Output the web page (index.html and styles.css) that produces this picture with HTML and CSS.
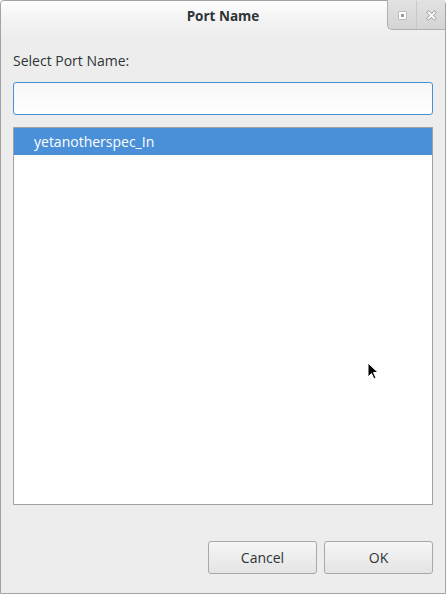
FILE: index.html
```html
<!DOCTYPE html>
<html>
<head>
<meta charset="utf-8">
<link rel="stylesheet" href="styles.css">
</head>
<body>
<div class="window">
  <div class="titlebar">
    <div class="spacer"></div>
    <div class="title">Port Name</div>
    <div class="wbuttons">
      <div class="wbtn">
        <svg width="9" height="9" viewBox="0 0 9 9"><rect x="0.5" y="0.5" width="8" height="8" fill="#9a9a9a"/><rect x="1" y="1" width="7" height="7" fill="#ffffff"/><rect x="3" y="3" width="3" height="3" fill="#9a9a9a"/></svg>
      </div>
      <div class="wbtn">
        <svg width="11" height="11" viewBox="0 0 11 11"><path d="M2.5 2.5 L8.5 8.5 M8.5 2.5 L2.5 8.5" stroke="#9a9a9a" stroke-width="3.2" stroke-linecap="square"/><path d="M2.5 2.5 L8.5 8.5 M8.5 2.5 L2.5 8.5" stroke="#ffffff" stroke-width="1.8" stroke-linecap="square"/></svg>
      </div>
    </div>
  </div>
  <div class="content">
    <div class="label">Select Port Name:</div>
    <div class="entry"></div>
    <div class="list">
      <div class="row selected">yetanotherspec_In</div>
    </div>
    <div class="actions">
      <div class="btn">Cancel</div>
      <div class="btn">OK</div>
    </div>
  </div>
  <svg class="cursor" width="13" height="19" viewBox="0 0 13 19"><path d="M1 1 L1 15 L4.5 11.5 L7 17 L9 16 L6.5 10.5 L11 10.5 Z" fill="#000" stroke="#fff" stroke-width="1"/></svg>
</div>
</body>
</html>
```
FILE: styles.css
```css
html, body {
  margin: 0;
  padding: 0;
}
body {
  width: 446px;
  height: 594px;
  overflow: hidden;
  font-family: "Open Sans", "DejaVu Sans", sans-serif;
  font-size: 14px;
  color: #2e3436;
}
.window {
  position: relative;
  box-sizing: border-box;
  width: 446px;
  height: 594px;
  border: 1px solid #a3a3a3;
  border-radius: 4px 4px 0 0;
  background: #ededed;
}
.titlebar {
  height: 39px;
  display: grid;
  grid-template-columns: 58px 1fr 58px;
  align-items: start;
  background: linear-gradient(#ffffff, #f4f4f4 40%, #ededed);
  border-radius: 4px 4px 0 0;
}
.title {
  text-align: center;
  font-weight: bold;
  font-size: 13.5px;
  line-height: 16px;
  padding-top: 7px;
  color: #2e3436;
}
.wbuttons {
  display: flex;
  border-left: 1px solid #b0b0b0;
  border-bottom: 1px solid #b0b0b0;
  border-radius: 0 0 0 5px;
  background: linear-gradient(#e2e2e2, #d4d4d4);
  margin-top: -1px;
  padding-top: 1px;
  box-sizing: border-box;
  height: 30px;
}
.wbtn {
  flex: 1;
  display: flex;
  align-items: center;
  justify-content: center;
}
.wbtn + .wbtn {
  border-left: 1px solid #c8c8c8;
}
.content {
  display: flex;
  flex-direction: column;
  padding: 0 12px;
}
.label {
  margin-top: 12px;
  line-height: 18px;
  height: 18px;
  color: #2e3436;
}
.entry {
  margin-top: 12px;
  height: 33px;
  box-sizing: border-box;
  border: 1px solid #4a90d9;
  border-radius: 3px;
  background: linear-gradient(#f7f7f7, #ffffff);
}
.list {
  margin-top: 12px;
  height: 378px;
  box-sizing: border-box;
  border: 1px solid #a3a3a3;
  background: #ffffff;
}
.row {
  height: 27px;
  line-height: 27px;
  padding-left: 20px;
}
.row.selected {
  background: #4a90d9;
  color: #ffffff;
}
.actions {
  margin-top: 36px;
  display: flex;
  justify-content: flex-end;
  gap: 7px;
}
.btn {
  width: 109px;
  height: 33px;
  box-sizing: border-box;
  border: 1px solid #a8a8a8;
  border-radius: 3px;
  background: linear-gradient(#f6f6f6, #e4e4e4);
  display: flex;
  align-items: center;
  justify-content: center;
  color: #2e3436;
}
.cursor {
  position: absolute;
  left: 366px;
  top: 361px;
}
```
